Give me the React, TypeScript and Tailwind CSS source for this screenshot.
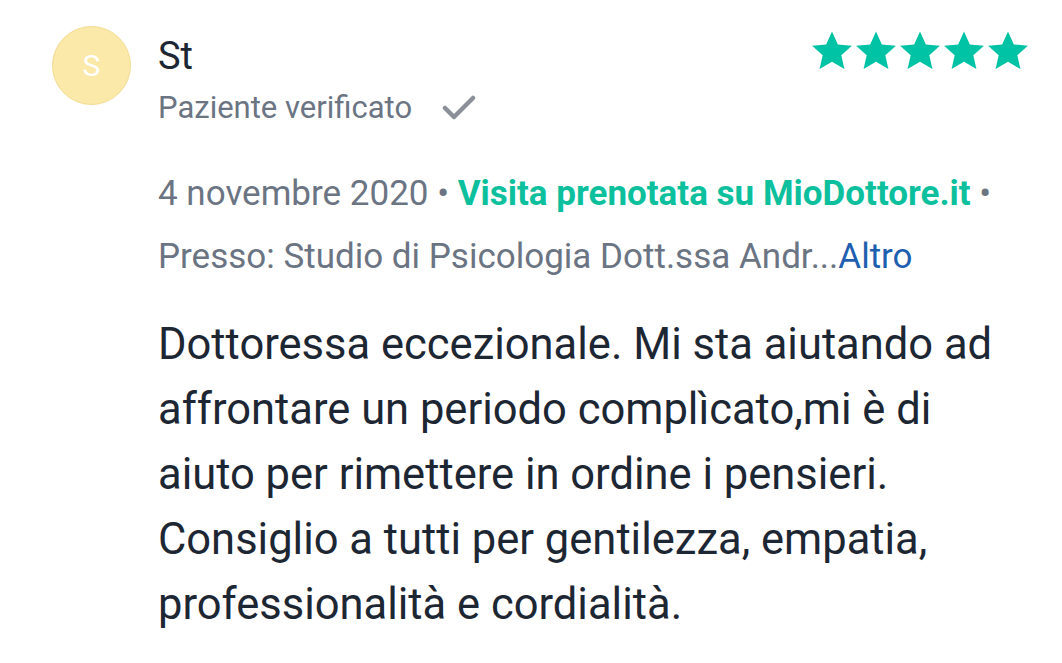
import React from "react";

const Star = () => (
  <svg width="44" height="42" viewBox="0 0 24 23" className="block">
    <path d="M12 0.8l3.2 7.1 7.7.7-5.8 5.2 1.7 7.6L12 17.4l-6.8 4 1.7-7.6L1.1 8.6l7.7-.7z" fill="#00c3a5" />
  </svg>
);

export default function App() {
  return (
    <div className="w-[1062px] h-[663px] bg-white overflow-hidden" style={{ fontFamily: "Roboto, 'Noto Sans', sans-serif" }}>
      <div className="flex pl-[52px] pt-[26px] pr-[32px]">
        <div className="w-[79px] h-[79px] rounded-full bg-[#fbe9a9] border border-[#f3dc92] flex items-center justify-center shrink-0">
          <span className="text-white text-[30px] leading-none">S</span>
        </div>
        <div className="flex-1 ml-[27px]">
          <div className="flex justify-between items-start">
            <div>
              <div className="text-[#1d2633] text-[38px] leading-[46px] mt-[7px]">St</div>
              <div className="flex items-center mt-[11px]">
                <span className="text-[#6b7483] text-[31px] leading-[36px]">Paziente verificato</span>
                <svg width="34" height="28" viewBox="0 0 34 28" className="ml-[30px]">
                  <path d="M3 14l9 9L31 4" fill="none" stroke="#8a8f98" strokeWidth="4.5" strokeLinecap="round" strokeLinejoin="round" />
                </svg>
              </div>
            </div>
            <div className="flex gap-0 mt-[4px]">
              <Star /><Star /><Star /><Star /><Star />
            </div>
          </div>
          <div className="mt-[48px] text-[35px] leading-[40px] text-[#6b7483] whitespace-nowrap">
            4 novembre 2020 • <span className="text-[#0cbf9d] font-bold">Visita prenotata su MioDottore.it</span> •
          </div>
          <div className="mt-[23px] text-[35px] leading-[40px] text-[#6b7483] whitespace-nowrap">
            Presso: Studio di Psicologia Dott.ssa Andr...<span className="text-[#1f5fb0]">Altro</span>
          </div>
          <div className="mt-[35px] text-[43.5px] leading-[65px] text-[#1d2633] whitespace-nowrap">
            <div>Dottoressa eccezionale. Mi sta aiutando ad</div>
            <div>affrontare un periodo complìcato,mi è di</div>
            <div>aiuto per rimettere in ordine i pensieri.</div>
            <div>Consiglio a tutti per gentilezza, empatia,</div>
            <div>professionalità e cordialità.</div>
          </div>
        </div>
      </div>
    </div>
  );
}
